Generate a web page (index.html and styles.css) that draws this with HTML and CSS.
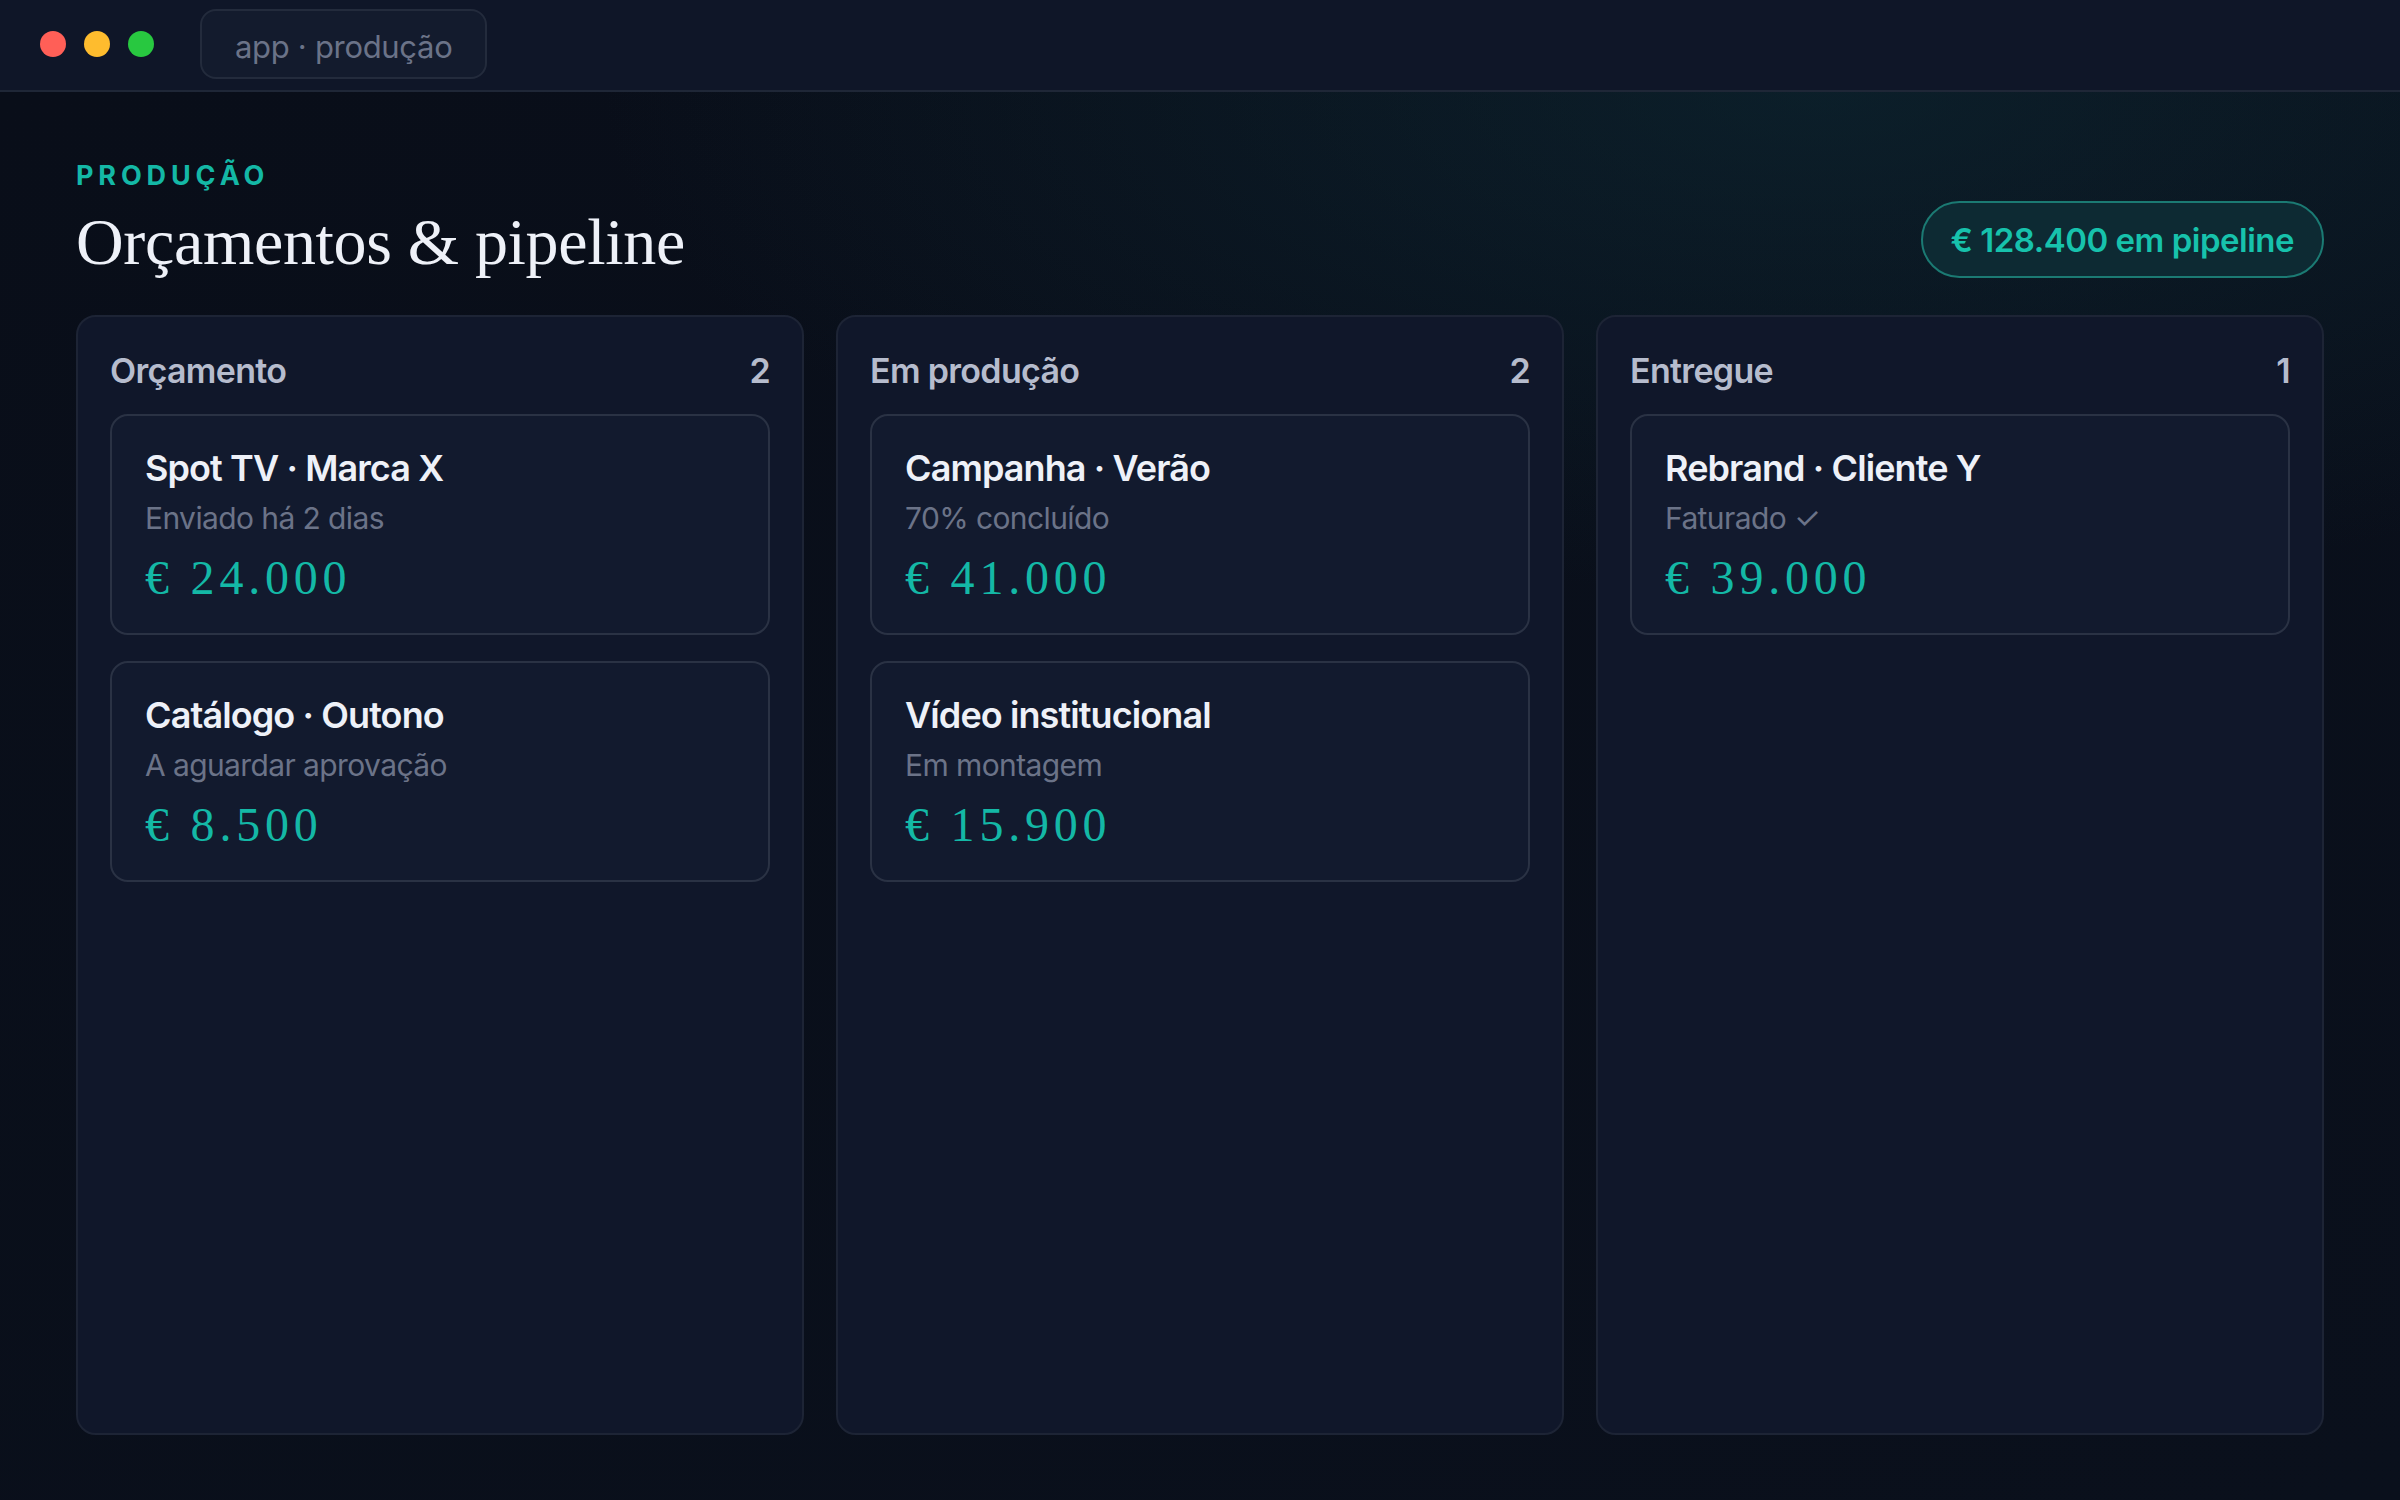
FILE: index.html
```html
<!DOCTYPE html>
<html lang="pt">
<head>
    <meta charset="utf-8">
    <title>Orçamentos &amp; pipeline</title>
    <link rel="stylesheet" href="styles.css">
</head>
<body>
    <div class="window">
        <header class="titlebar">
            <div class="lights">
                <span class="light red"></span>
                <span class="light yellow"></span>
                <span class="light green"></span>
            </div>
            <div class="address">app · produção</div>
        </header>

        <main class="board">
            <div class="board-head">
                <div>
                    <div class="eyebrow">PRODUÇÃO</div>
                    <h1 class="title">Orçamentos &amp; pipeline</h1>
                </div>
                <div class="total">€ 128.400 em pipeline</div>
            </div>

            <div class="columns">
                <section class="column">
                    <div class="column-head">
                        <span>Orçamento</span>
                        <span class="count">2</span>
                    </div>
                    <div class="card">
                        <div class="card-title">Spot TV · Marca X</div>
                        <div class="card-sub">Enviado há 2 dias</div>
                        <div class="card-amount">€ 24.000</div>
                    </div>
                    <div class="card">
                        <div class="card-title">Catálogo · Outono</div>
                        <div class="card-sub">A aguardar aprovação</div>
                        <div class="card-amount">€ 8.500</div>
                    </div>
                </section>

                <section class="column">
                    <div class="column-head">
                        <span>Em produção</span>
                        <span class="count">2</span>
                    </div>
                    <div class="card">
                        <div class="card-title">Campanha · Verão</div>
                        <div class="card-sub">70% concluído</div>
                        <div class="card-amount">€ 41.000</div>
                    </div>
                    <div class="card">
                        <div class="card-title">Vídeo institucional</div>
                        <div class="card-sub">Em montagem</div>
                        <div class="card-amount">€ 15.900</div>
                    </div>
                </section>

                <section class="column">
                    <div class="column-head">
                        <span>Entregue</span>
                        <span class="count">1</span>
                    </div>
                    <div class="card">
                        <div class="card-title">Rebrand · Cliente Y</div>
                        <div class="card-sub">Faturado ✓</div>
                        <div class="card-amount">€ 39.000</div>
                    </div>
                </section>
            </div>
        </main>
    </div>
</body>
</html>
```

FILE: styles.css
```css
* {
    box-sizing: border-box;
}
body {
    margin: 0;
    font-family: 'Inter', 'Noto Sans', sans-serif;
    background-color: #0a101c;
    color: #e8ecf5;
}
.window {
    display: flex;
    flex-direction: column;
    height: 100vh;
}

/* window chrome */
.titlebar {
    display: flex;
    align-items: center;
    height: 92px;
    padding: 0 0 2px 40px;
    background-color: #0f1628;
    border-bottom: 2px solid #1f2737;
    flex-shrink: 0;
}
.lights {
    display: flex;
    gap: 18px;
}
.light {
    width: 26px;
    height: 26px;
    border-radius: 50%;
}
.light.red { background-color: #ff5f57; }
.light.yellow { background-color: #febc2e; }
.light.green { background-color: #28c840; }
.address {
    margin-left: 46px;
    height: 70px;
    padding: 4px 33px 0;
    display: flex;
    align-items: center;
    font-size: 31px;
    color: #6b7388;
    letter-spacing: -0.01em;
    background-color: #131b2d;
    border: 2px solid #232b3c;
    border-radius: 16px;
}

/* board */
.board {
    flex: 1;
    display: flex;
    flex-direction: column;
    padding: 68px 76px 65px 76px;
    background:
        radial-gradient(ellipse 1700px 700px at 76% 0%, rgba(16, 62, 72, 0.34), transparent 72%),
        linear-gradient(160deg, #090e19 0%, #0a101c 100%);
}
.board-head {
    display: flex;
    justify-content: space-between;
    align-items: flex-end;
}
.eyebrow {
    font-size: 27px;
    line-height: 32px;
    font-weight: 700;
    letter-spacing: 0.18em;
    color: #14b8a6;
}
.title {
    margin: 14px 0 0 0;
    font-family: 'Liberation Serif', serif;
    font-weight: 400;
    font-size: 66px;
    line-height: 72px;
    letter-spacing: -0.005em;
    color: #eef1f8;
}
.total {
    height: 77px;
    padding: 0 28px;
    display: flex;
    align-items: center;
    font-size: 33px;
    font-weight: 600;
    letter-spacing: -0.015em;
    color: #17c2ac;
    background-color: #0d2a33;
    border: 2px solid #1b7a73;
    border-radius: 40px;
}

.columns {
    flex: 1;
    display: grid;
    grid-template-columns: repeat(3, 1fr);
    gap: 32px;
    margin-top: 37px;
}
.column {
    display: flex;
    flex-direction: column;
    gap: 26px;
    padding: 31px 32px;
    background-color: #10172a;
    border: 2px solid #1d2435;
    border-radius: 20px;
}
.column-head {
    display: flex;
    justify-content: space-between;
    align-items: center;
    height: 44px;
    margin-bottom: -4px;
    font-size: 34px;
    font-weight: 600;
    letter-spacing: -0.02em;
    color: #b6bccd;
}
.card {
    padding: 30px 33px 27px;
    background-color: #121a2e;
    border: 2px solid #2a3244;
    border-radius: 18px;
}
.card-title {
    font-size: 36px;
    line-height: 44px;
    font-weight: 600;
    letter-spacing: -0.025em;
    color: #eef1f8;
}
.card-sub {
    margin-top: 10px;
    font-size: 30px;
    line-height: 36px;
    letter-spacing: -0.02em;
    color: #6b7388;
}
.card-amount {
    margin-top: 14px;
    font-family: 'Liberation Serif', serif;
    font-size: 48px;
    line-height: 56px;
    letter-spacing: 0.1em;
    color: #14b8a6;
}
```
